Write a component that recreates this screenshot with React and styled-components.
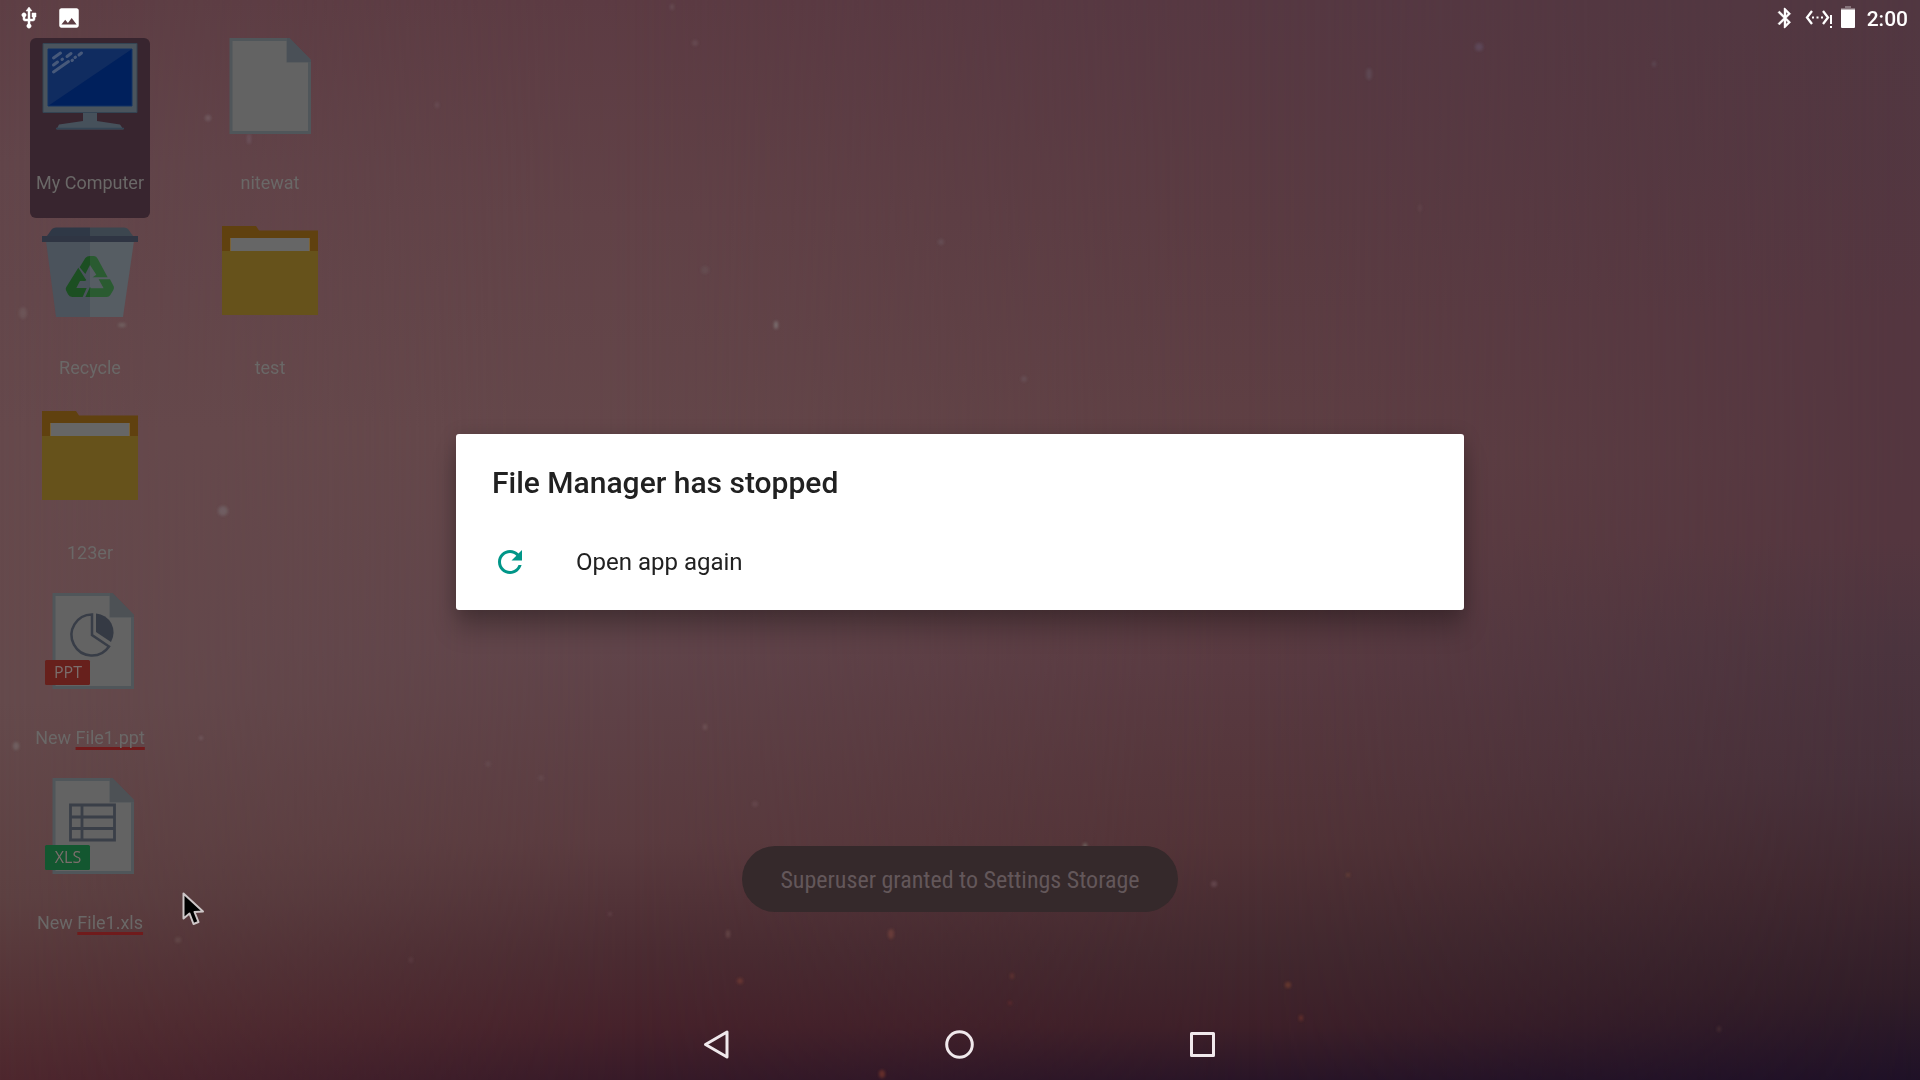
import React from 'react';
import styled, { createGlobalStyle, css } from 'styled-components';

const GlobalStyle = createGlobalStyle`
  *, *::before, *::after { box-sizing: border-box; }
  body {
    margin: 0;
    background: #20142a;
    font-family: Roboto, "Noto Sans", sans-serif;
  }
  button {
    font: inherit;
    color: inherit;
    background: none;
    border: 0;
    padding: 0;
    cursor: default;
  }
  svg { display: block; }
`;

const Screen = styled.div`
  position: relative;
  display: flex;
  flex-direction: column;
  min-height: 100vh;
  overflow: hidden;
`;

const Wallpaper = styled.div`
  position: absolute;
  inset: 0;
  z-index: -1;
`;

const Column = styled.div`
  position: absolute;
  inset: 0;
  background: linear-gradient(to bottom, ${(p) => p.$stops});
  ${(p) =>
    p.$from !== undefined &&
    css`
      mask-image: linear-gradient(to right, transparent ${p.$from}%, black ${p.$to}%);
    `}
`;

const Specks = styled.svg`
  position: absolute;
  inset: 0;
  width: 100%;
  height: 100%;
`;

const StatusBar = styled.header`
  display: flex;
  align-items: center;
  justify-content: space-between;
  height: 36px;
  padding: 0 12px 0 17px;
  color: #fff;
`;

const StatusGroup = styled.div`
  display: flex;
  align-items: center;
  gap: ${(p) => p.$gap}px;
`;

const Clock = styled.time`
  padding-top: 2px;
  font-size: 21px;
  line-height: 34px;
  font-weight: 500;
  margin-left: 4px;
`;

const Workspace = styled.main`
  position: relative;
  flex: 1;
  display: flex;
  padding: 2px 30px;
`;

const Desktop = styled.div`
  display: grid;
  grid-auto-flow: column;
  grid-template-rows: repeat(5, 180px);
  grid-auto-columns: 120px;
  gap: 5px 60px;
`;

const Shortcut = styled.button`
  display: flex;
  flex-direction: column;
  align-items: center;
  gap: 37px;
  border-radius: 6px;
  background: ${(p) => (p.$selected ? '#38252f' : 'transparent')};
`;

const Label = styled.span`
  font-size: 18px;
  line-height: 24px;
  white-space: nowrap;
  color: #6a6867;
`;

const Misspelt = styled.span`
  text-decoration: underline 3px #701b1c;
  text-underline-offset: 3px;
  text-decoration-skip-ink: none;
`;

const Overlay = styled.div`
  position: absolute;
  inset: 0;
  display: flex;
  align-items: center;
  justify-content: center;
`;

const Dialog = styled.section`
  width: 1008px;
  max-width: 90%;
  padding: 31px 0 12px;
  border-radius: 3px;
  background: #fff;
  color: #212121;
  box-shadow: 0 20px 24px rgba(0, 0, 0, 0.22), 0 2px 18px rgba(0, 0, 0, 0.18);
`;

const DialogTitle = styled.h1`
  margin: 0 0 25px;
  padding: 0 36px;
  font-size: 30px;
  line-height: 36px;
  font-weight: 500;
`;

const DialogAction = styled.button`
  display: flex;
  align-items: center;
  gap: 48px;
  width: 100%;
  height: 72px;
  padding: 0 36px;
  font-size: 24px;
  line-height: 36px;
  text-align: left;
`;

const ToastArea = styled.div`
  position: absolute;
  left: 0;
  right: 0;
  bottom: 96px;
  display: flex;
  justify-content: center;
`;

const Toast = styled.div`
  padding: 2px 38px 0;
  border-radius: 33px;
  background: #35292b;
  color: #63575a;
  font-family: "Roboto Condensed", Roboto, sans-serif;
  font-size: 24px;
  line-height: 64px;
  white-space: nowrap;
`;

const NavBar = styled.nav`
  display: flex;
  justify-content: center;
  height: 72px;
`;

const NavButton = styled.button`
  display: flex;
  align-items: center;
  justify-content: center;
  width: 243px;
`;

const Pointer = styled.svg`
  position: absolute;
  left: 181px;
  top: 891px;
`;

const columns = [
  { stops: '#5e3f45 0%, #62454a 15%, #66494c 40%, #654a4c 65%, #5d4142 83%, #532f33 95%, #4e272e 100%' },
  { from: 0, to: 33, stops: '#5c3b43 0%, #614247 20%, #64474a 40%, #60444a 60%, #5a3b3f 78%, #4b2c32 88%, #46222b 95%, #371a28 100%' },
  { from: 33, to: 65, stops: '#563842 0%, #5a3b42 20%, #5f4044 42%, #593a41 62%, #523337 78%, #43292f 88%, #3e2029 95%, #291527 100%' },
  { from: 65, to: 100, stops: '#513741 0%, #543640 30%, #54363f 50%, #4b343e 60%, #46303a 72%, #3e272f 82%, #301d28 92%, #1f1127 100%' },
];

const specks = [
  [208, 118, 3, 3, '#8b7f86', 0.5], [249, 139, 2, 5, '#8b7f96', 0.35], [437, 105, 2, 3, '#8b7f86', 0.3],
  [23, 313, 4, 6, '#8b8580', 0.3], [122, 325, 4, 2, '#8b9590', 0.45], [776, 325, 2, 4, '#9ba5a0', 0.6],
  [223, 511, 5, 5, '#8a9095', 0.4], [16, 746, 3, 4, '#8b9590', 0.45], [201, 738, 2, 2, '#8b7f86', 0.5],
  [941, 242, 3, 3, '#80838a', 0.3], [1024, 379, 3, 3, '#80838a', 0.3], [1369, 74, 3, 6, '#6c6170', 0.5],
  [1479, 47, 4, 4, '#6c6180', 0.5], [1654, 64, 2, 3, '#6c6170', 0.5], [705, 270, 4, 4, '#77777a', 0.25],
  [705, 727, 2, 3, '#9b8580', 0.4], [488, 764, 3, 3, '#8b7f86', 0.2], [541, 778, 3, 3, '#8b7f86', 0.2],
  [672, 7, 2, 3, '#8b7f86', 0.35], [695, 43, 3, 3, '#8b7f86', 0.3], [1420, 208, 2, 4, '#7a6068', 0.3],
  [1085, 846, 2, 3, '#9bb5a0', 0.5], [1132, 852, 3, 3, '#8b6f76', 0.4], [1214, 884, 3, 3, '#9b7f86', 0.4],
  [728, 934, 2, 4, '#a08078', 0.4], [891, 934, 3, 5, '#a05a48', 0.5], [740, 981, 3, 3, '#a04f38', 0.5],
  [1012, 976, 2, 3, '#a04f38', 0.4], [1010, 1003, 2, 2, '#a03f38', 0.4], [882, 1074, 3, 4, '#b05030', 0.55],
  [1288, 985, 3, 3, '#a85a30', 0.5], [1301, 1018, 2, 3, '#a84a30', 0.5], [1348, 875, 2, 2, '#986038', 0.5],
  [1719, 1029, 2, 3, '#705048', 0.4], [755, 804, 3, 3, '#8b6f76', 0.3], [178, 940, 3, 3, '#8b7f76', 0.3],
  [610, 914, 2, 2, '#8b6f76', 0.4], [411, 960, 2, 3, '#8b6f76', 0.25],
];

function UsbIcon() {
  return (
    <svg width="24" height="24" viewBox="0 0 24 24" fill="currentColor" stroke="currentColor" strokeWidth="0.5" aria-hidden="true">
      <path d="M15 7v4h1v2h-3V5h2l-3-4-3 4h2v8H8v-2.07c.7-.37 1.2-1.08 1.2-1.93 0-1.21-.99-2.2-2.2-2.2-1.21 0-2.2.99-2.2 2.2 0 .85.5 1.56 1.2 1.93V13c0 1.11.89 2 2 2h3v3.05c-.71.37-1.2 1.1-1.2 1.95 0 1.22.99 2.2 2.2 2.2 1.21 0 2.2-.98 2.2-2.2 0-.85-.49-1.58-1.2-1.95V15h3c1.11 0 2-.89 2-2v-2h1V7h-4z" />
    </svg>
  );
}

function ImageIcon() {
  return (
    <svg width="26" height="26" viewBox="0 0 24 24" fill="currentColor" aria-hidden="true">
      <path d="M21 19V5c0-1.100-.9-2-2-2H5c-1.100 0-2 .9-2 2v14c0 1.100.9 2 2 2h14c1.100 0 2-.9 2-2zM8.500 13.500l2.500 3.010L14.500 12l4.500 6H5l3.500-4.500z" />
    </svg>
  );
}

function BluetoothIcon() {
  return (
    <svg width="24" height="24" viewBox="0 0 24 24" fill="currentColor" stroke="currentColor" strokeWidth="0.4" aria-hidden="true">
      <path d="M17.710 7.710L12 2h-1v7.590L6.410 5 5 6.410 10.590 12 5 17.590 6.410 19 11 14.410V22h1l5.710-5.710-4.300-4.290 4.300-4.290zM13 5.830l1.880 1.880L13 9.590V5.830zm1.880 10.460L13 18.170v-3.760l1.880 1.880z" />
    </svg>
  );
}

function EthernetIcon() {
  return (
    <svg width="28" height="24" viewBox="0 0 28 24" aria-hidden="true">
      <path d="M7 5.500L2 12l5 6.500M18 5.500l5 6.500-5 6.500" transform="translate(0 -0.500)" fill="none" stroke="currentColor" strokeWidth="2.300" />
      <path d="M7 10.500h2v2H7zM11.500 10.500h2v2h-2zM16 10.500h2v2h-2z" fill="currentColor" />
      <path d="M25 9h2v9h-2zM25 20h2v2h-2z" fill="currentColor" />
    </svg>
  );
}

function BatteryIcon() {
  return (
    <svg width="14" height="24" viewBox="0 0 14 24" fill="currentColor" aria-hidden="true">
      <path d="M4 0h6v2h4v2H0V2h4z" opacity="0.3" />
      <path d="M0 3.500h14V21a1 1 0 0 1-1 1H1a1 1 0 0 1-1-1z" />
    </svg>
  );
}

function ComputerIcon() {
  return (
    <svg width="96" height="96" viewBox="0 0 96 96" aria-hidden="true">
      <path d="M1 5.500h94v69H1z" fill="#4a545d" stroke="#344453" />
      <path d="M6 11h84v57H6z" fill="#00205c" />
      <path d="M6 11h84L6 68z" fill="#102c60" />
      <path d="M6 11h84v57H6z" fill="none" stroke="#123264" />
      <path d="M41 75h14v8l23 3.500 3.500 5H14.500L17 86.500 41 83z" fill="#46515b" />
      <path d="M14 90.500h68" stroke="#344453" strokeWidth="1.500" />
      <g stroke="#47597a" strokeWidth="3" strokeLinecap="round">
        <path d="M11.500 20l7-5M25 18.500l4-3M11.500 27l4-3M20 21.500l.5-.4M11.500 34l15-10.500M30 22.500l.5-.4M33 19.500l.5-.4M37 17l2.500-2" />
      </g>
    </svg>
  );
}

function RecycleIcon() {
  return (
    <svg width="96" height="96" viewBox="0 0 96 96" aria-hidden="true">
      <path d="M5 13l5-7q1.500-1.500 4-1.500h34V13z" fill="#2f3846" />
      <path d="M91 13l-5-7q-1.500-1.500-4-1.500H48V13z" fill="#3c464f" />
      <path d="M4 18h44v76H14z" fill="#4b535c" />
      <path d="M92 18H48v76h33z" fill="#565d63" />
      <path d="M0 13h96v6H0z" fill="#2f3543" />
      <clipPath id="bin-left"><path d="M0 0h48v96H0z" /></clipPath>
      <clipPath id="bin-right"><path d="M48 0h48v96H48z" /></clipPath>
      {[['bin-left', '#1c4f22'], ['bin-right', '#2a5b31']].map(([clip, fill]) => (
        <g key={clip} clipPath={`url(#${clip})`}>
          <g transform="translate(-42 -13) scale(0.3333)" fill={fill}>
            <path d="M239 172L256 144Q261 138 270 138L282 138Q289 138 293 146L323 202H278L289 194L270 165L256 192Z" />
            <path d="M235 173L259 211L240 213L229 234H260L248 261H217Q208 261 204 253L198 241Q196 236 199 231Z" />
            <path d="M296 208H330L341 229Q343 234 340 240L331 255Q327 261 320 261H256L270 231L273 235H311Z" />
            <path d="M240 213L256 213L258 208Z" />
          </g>
        </g>
      ))}
    </svg>
  );
}

function FolderIcon() {
  return (
    <svg width="96" height="96" viewBox="0 0 96 96" aria-hidden="true">
      <path d="M0 3h34l3 4.500h59V29H0z" fill="#60410f" />
      <path d="M8 15h80v14H8z" fill="#7a6235" />
      <path d="M9 15h78v14H9z" fill="#666666" />
      <path d="M0 28h96v64H0z" fill="#66521b" />
    </svg>
  );
}

function FileIcon({ children, shift = 0, fold = '#4a5057' }) {
  return (
    <svg width="96" height="96" viewBox="0 0 96 96" aria-hidden="true">
      <g transform={`translate(${shift} 0)`}>
        <path d="M7.500 0h60L89 22v74H7.500z" fill="#50565a" />
        <path d="M10.500 3h54v21.500h21.500V93h-75.500z" fill="#636363" />
        <path d="M65 0h2.500L89 22v2H65z" fill={fold} />
      </g>
      {children}
    </svg>
  );
}

function Badge({ fill, text }) {
  return (
    <>
      <rect x="3" y="67" width="45" height="25" rx="1.500" fill={fill} />
      <text x="26" y="85" textAnchor="middle" fontFamily="Open Sans, Roboto, sans-serif" fontSize="16" fontWeight="500" fill="#7b6e6c">
        {text}
      </text>
    </>
  );
}

function PptIcon() {
  return (
    <FileIcon shift={3} fold="#4d5155">
      <path d="M50 21.500A20.500 20.500 0 1 0 67 53.500L50 42z" fill="none" stroke="#383d47" strokeWidth="2.500" />
      <path d="M54 20.500A19 19 0 0 1 69 49L54 39z" fill="#353a44" />
      <Badge fill="#67201c" text="PPT" />
    </FileIcon>
  );
}

function XlsIcon() {
  return (
    <FileIcon shift={3} fold="#4d5155">
      <path d="M28.500 27h44v35h-44zM28.500 39h44M28.500 50.500h44M40 27v35" fill="none" stroke="#3a3f48" strokeWidth="2.800" />
      <Badge fill="#135730" text="XLS" />
    </FileIcon>
  );
}

const shortcuts = [
  { name: 'My Computer', icon: <ComputerIcon />, selected: true },
  { name: 'Recycle', icon: <RecycleIcon /> },
  { name: '123er', icon: <FolderIcon /> },
  { name: 'New ', marked: 'File1.ppt', icon: <PptIcon /> },
  { name: 'New ', marked: 'File1.xls', icon: <XlsIcon /> },
  { name: 'nitewat', icon: <FileIcon /> },
  { name: 'test', icon: <FolderIcon /> },
];

export default function App() {
  return (
    <Screen>
      <GlobalStyle />
      <Wallpaper>
        {columns.map((c) => (
          <Column key={c.stops} $stops={c.stops} $from={c.from} $to={c.to} />
        ))}
        <Specks viewBox="0 0 1920 1080" preserveAspectRatio="xMidYMid slice" aria-hidden="true">
          <filter id="soft"><feGaussianBlur stdDeviation="1.500" /></filter>
          <g filter="url(#soft)" opacity="0.75">
            {specks.map(([x, y, rx, ry, fill, opacity]) => (
              <ellipse key={`${x}-${y}`} cx={x} cy={y} rx={rx} ry={ry} fill={fill} opacity={opacity} />
            ))}
          </g>
        </Specks>
      </Wallpaper>

      <StatusBar>
        <StatusGroup $gap={15}>
          <UsbIcon />
          <ImageIcon />
        </StatusGroup>
        <StatusGroup $gap={8}>
          <BluetoothIcon />
          <EthernetIcon />
          <BatteryIcon />
          <Clock>2:00</Clock>
        </StatusGroup>
      </StatusBar>

      <Workspace>
        <Desktop>
          {shortcuts.map((s) => (
            <Shortcut key={s.name + (s.marked || '')} $selected={s.selected}>
              {s.icon}
              <Label>
                {s.name}
                {s.marked && <Misspelt>{s.marked}</Misspelt>}
              </Label>
            </Shortcut>
          ))}
        </Desktop>

        <ToastArea>
          <Toast role="status">Superuser granted to Settings Storage</Toast>
        </ToastArea>

        <Overlay>
          <Dialog role="alertdialog" aria-labelledby="dialog-title">
            <DialogTitle id="dialog-title">File Manager has stopped</DialogTitle>
            <DialogAction>
              <svg width="36" height="36" viewBox="0 0 24 24" fill="#009688" aria-hidden="true">
                <path d="M17.650 6.350C16.200 4.900 14.210 4 12 4c-4.420 0-7.990 3.580-7.990 8s3.570 8 7.990 8c3.730 0 6.840-2.550 7.730-6h-2.080c-.82 2.330-3.040 4-5.650 4-3.310 0-6-2.690-6-6s2.690-6 6-6c1.660 0 3.140.69 4.220 1.780L13 11h7V4l-2.350 2.350z" />
              </svg>
              Open app again
            </DialogAction>
          </Dialog>
        </Overlay>
      </Workspace>

      <NavBar>
        <NavButton aria-label="Back">
          <svg width="32" height="32" viewBox="0 0 32 32" fill="none" stroke="#f0e9ec" strokeWidth="3" strokeLinejoin="round">
            <path d="M4.500 16.500L26 4v25z" />
          </svg>
        </NavButton>
        <NavButton aria-label="Home">
          <svg width="32" height="32" viewBox="0 0 32 32" fill="none" stroke="#f0e9ec" strokeWidth="3">
            <circle cx="15.500" cy="16.500" r="12.800" />
          </svg>
        </NavButton>
        <NavButton aria-label="Recent apps">
          <svg width="32" height="32" viewBox="0 0 32 32" fill="none" stroke="#f0e9ec" strokeWidth="3" strokeLinejoin="round">
            <path d="M4.500 5.500h22v22h-22z" />
          </svg>
        </NavButton>
      </NavBar>

      <Pointer width="26" height="36" viewBox="0 0 26 36" aria-hidden="true">
        <path d="M2.500 2.500v25l6-5 4 10.500 5-2-4-10 8.500-.5z" fill="#000" stroke="#cdc6c7" strokeWidth="2" strokeLinejoin="round" />
      </Pointer>
    </Screen>
  );
}
